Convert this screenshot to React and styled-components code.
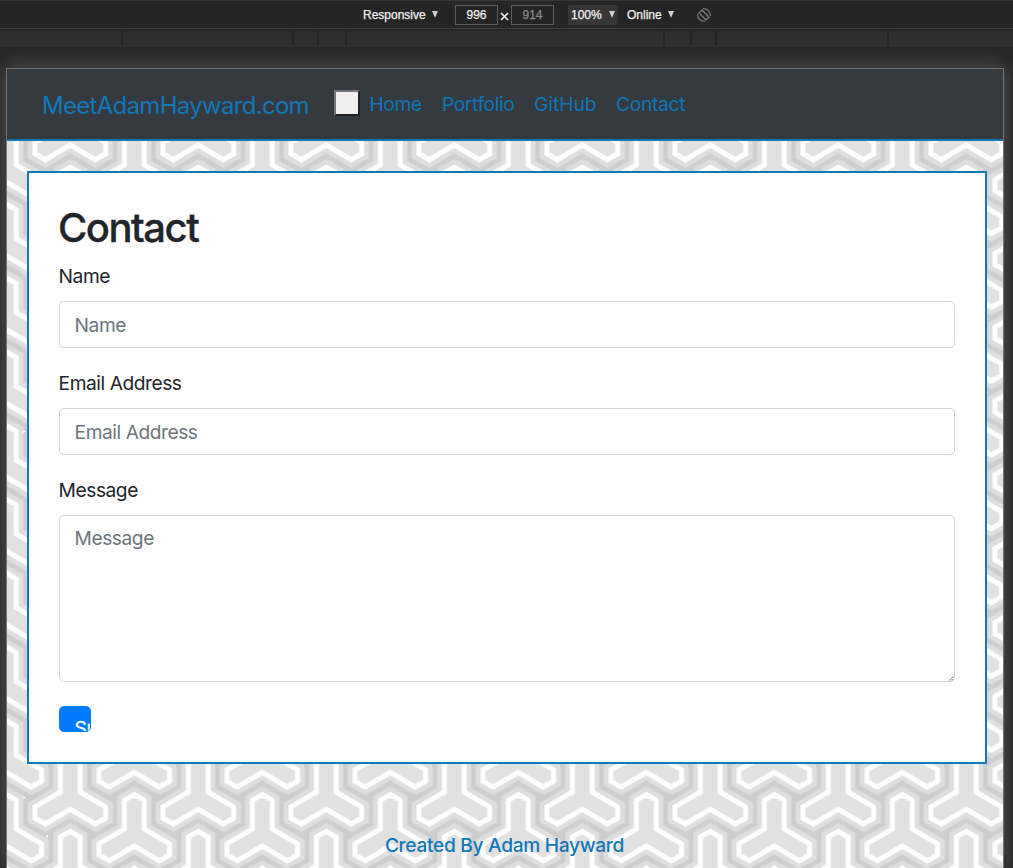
import React from 'react';
import styled, { createGlobalStyle } from 'styled-components';

const blue = '#1278b8';

const GlobalStyle = createGlobalStyle`
  *, *::before, *::after { box-sizing: border-box; }
  body {
    margin: 0;
    background: #282828;
    color: #212529;
    font-family: Inter, "Liberation Sans", sans-serif;
    font-size: 19.2px;
    line-height: 1.5;
    letter-spacing: -0.46px;
    overflow: hidden;
  }
`;

const Window = styled.div`
  height: 868px;
  display: flex;
  flex-direction: column;
  overflow: hidden;
`;

const Toolbar = styled.header`
  flex: none;
  height: 29px;
  border-top: 1px solid #36373d;
  border-bottom: 1px solid #3f3f3f;
  background: #252525;
  display: flex;
  align-items: center;
  padding-left: 363px;
  font-family: "Liberation Sans", sans-serif;
  font-size: 12px;
  line-height: 14px;
  letter-spacing: 0;
  color: #f2f2f2;
  -webkit-text-stroke: 0.25px currentColor;
`;

const Picker = styled.span`
  display: flex;
  align-items: center;
  justify-content: space-between;
  width: ${(p) => p.$width}px;
  height: 20px;
  margin-left: ${(p) => p.$before || 0}px;
  margin-right: ${(p) => p.$gap || 0}px;
  padding: 0 ${(p) => (p.$active ? 3 : 0)}px;
  border-radius: 2px;
  background: ${(p) => (p.$active ? '#363636' : 'transparent')};
`;

const Arrow = styled.i`
  border: solid transparent;
  border-width: 7px 3.5px 0;
  border-top-color: #cfcfcf;
`;

const SizeBox = styled.span`
  width: 43px;
  height: 20px;
  border: 1px solid #5d5d5d;
  text-align: center;
  line-height: 18px;
  color: ${(p) => (p.$dim ? '#8d8d8d' : '#f2f2f2')};
`;

const Times = styled.svg`
  width: 9px;
  height: 9px;
  margin: 4px 2px 0 2px;
`;

const RotateIcon = styled.svg`
  width: 14px;
  height: 14px;
`;

const Ruler = styled.div`
  flex: none;
  height: 17px;
  margin-top: 1px;
  border-top: 1px solid #242424;
  display: flex;
  gap: 2px;
  background: #252525;
  border-bottom: 1px solid #2f2f2f;
`;

const RulerCell = styled.div`
  flex: ${(p) => (p.$width ? 'none' : '1')};
  width: ${(p) => p.$width}px;
  background: #2f2f2f;
`;

const Stage = styled.div`
  flex: 1;
  padding: 21px 9px 0 6px;
  display: flex;
  overflow: hidden;
`;

const Device = styled.div`
  flex: 1;
  position: relative;
  border: 1px solid #737373;
  border-bottom: 0;
  box-shadow: 0 0 20px 0 #555;
  background: #e2e2e2;
`;

const Backdrop = styled.svg`
  position: absolute;
  inset: 0;
  width: 100%;
  height: 100%;
`;

const Page = styled.div`
  position: relative;
  display: flex;
  flex-direction: column;
`;

const Nav = styled.nav`
  height: 72px;
  background: #343a40;
  border-bottom: 2px solid ${blue};
  display: flex;
  align-items: flex-start;
  padding-left: 35px;
`;

const Brand = styled.a`
  width: 292px;
  margin-top: 19px;
  font-size: 24px;
  letter-spacing: -0.7px;
  color: ${blue};
`;

const Toggler = styled.button`
  width: 26px;
  height: 26px;
  margin: 21px 9.5px 0 0;
  padding: 0;
  border: 2px solid;
  border-color: #767676 #212121 #212121 #767676;
  background: #efefef;
`;

const NavLink = styled.a`
  width: ${(p) => p.$width}px;
  margin-top: 21px;
  letter-spacing: ${(p) => p.$tracking ?? -0.3}px;
  color: ${blue};
`;

const Card = styled.main`
  height: 593px;
  margin: 30px 16px 0 20px;
  padding: 31px 30px 0;
  border: 2px solid ${blue};
  background: #fff;
`;

const Title = styled.h1`
  margin: 0 0 10px -1px;
  font-size: 40px;
  font-weight: 500;
  line-height: 48px;
  letter-spacing: -1.5px;
  -webkit-text-stroke: 0.3px currentColor;
`;

const Label = styled.label`
  display: block;
  height: 29px;
  margin-bottom: 10px;
  text-indent: -0.4px;
`;

const Input = styled.input`
  display: block;
  width: 100%;
  height: 47px;
  margin-bottom: 21px;
  padding: 7px 14.6px;
  border: 1px solid #ced4da;
  border-radius: 4.8px;
  font: inherit;
  letter-spacing: inherit;
  &::placeholder { color: #6c757d; }
`;

const MessageField = styled.div`
  position: relative;
  margin-bottom: 24px;
`;

const TextArea = styled(Input)`
  height: 167px;
  margin: 0;
  padding-top: 8px;
  resize: none;
`;

const Grip = styled.svg`
  position: absolute;
  right: 1px;
  bottom: 1px;
  width: 5px;
  height: 5px;
`;

const Submit = styled.button`
  display: block;
  width: 32px;
  height: 26px;
  padding: 7px 14.6px;
  border: 1px solid #007bff;
  border-radius: 4.8px;
  background: #007bff;
  color: #fff;
  font: inherit;
  letter-spacing: inherit;
  -webkit-text-stroke: 0.3px currentColor;
  text-align: left;
  overflow: hidden;
`;

const Footer = styled.footer`
  margin: 67px 1px 0 0;
  text-align: center;
  font-weight: 500;
  letter-spacing: -0.33px;
  color: ${blue};
`;

/* Three-armed figure, centred on x = 0 with its notch at y = 0. */
const figure =
  'M0 -51.6 L9.9 -46 V-17 L35.3 -2.3 V9 L25 14.7 L0 0 L-25 14.7 L-35.3 9 V-2.3 L-9.9 -17 V-46 Z';
const spots = [
  [64, 36.9], [0, 0], [128, 0], [0, 73.8], [128, 73.8], [64, 110.7], [64, -36.9], [0, 147.6], [128, 147.6],
];

function TrefoilBackdrop() {
  return (
    <Backdrop aria-hidden="true">
      <defs>
        <pattern id="trefoil" width="128" height="73.8" patternUnits="userSpaceOnUse" patternTransform="translate(63.3 76)">
          <rect width="128" height="74" fill="#cdcdcd" />
          {spots.map(([x, y]) => (
            <path key={`h${x}-${y}`} d={figure} transform={`translate(${x} ${y})`} fill="#dedede" stroke="#dedede" strokeWidth="14.4" />
          ))}
          {spots.map(([x, y]) => (
            <path key={`f${x}-${y}`} d={figure} transform={`translate(${x} ${y})`} fill="#e1e1e1" stroke="#fff" strokeWidth="5" />
          ))}
        </pattern>
      </defs>
      <rect width="100%" height="100%" fill="url(#trefoil)" />
      <path d="M16 727 l3 1.5 l-3 1.5 Z M38 767 l3 -1 v3 Z M16 361 l3 1.5 l-3 1.5 Z" fill="#fff" />
    </Backdrop>
  );
}

const rulerCells = [121, 169, 23, 26, 316, 25, 23, 170];

export default function App() {
  return (
    <Window>
      <GlobalStyle />
      <Toolbar>
        <Picker $width={75} $gap={17}>Responsive<Arrow /></Picker>
        <SizeBox>996</SizeBox>
        <Times viewBox="0 0 9 9"><path d="M1 1 L8 8 M8 1 L1 8" stroke="#eee" strokeWidth="1.7" /></Times>
        <SizeBox $dim>914</SizeBox>
        <Picker $width={50} $before={14} $gap={9} $active>100%<Arrow /></Picker>
        <Picker $width={47} $gap={23}>Online<Arrow /></Picker>
        <RotateIcon viewBox="0 0 14 14" fill="none" stroke="#858585" strokeWidth="1.1">
          <path d="M5 2 L12 9 L9 12 L2 5 Z" />
          <path d="M6 0.8 A6.3 6.3 0 0 1 13.2 8 M8 13.2 A6.3 6.3 0 0 1 0.8 6" />
        </RotateIcon>
      </Toolbar>
      <Ruler>
        {rulerCells.map((w, i) => <RulerCell key={i} $width={w} />)}
        <RulerCell />
      </Ruler>
      <Stage>
        <Device>
          <TrefoilBackdrop />
          <Page>
            <Nav>
              <Brand>MeetAdamHayward.com</Brand>
              <Toggler aria-label="Toggle navigation" />
              <NavLink $width={72.5} $tracking={-0.4}>Home</NavLink>
              <NavLink $width={92} $tracking={-0.4}>Portfolio</NavLink>
              <NavLink $width={82} $tracking={0}>GitHub</NavLink>
              <NavLink $width={80}>Contact</NavLink>
            </Nav>
            <Card>
              <Title>Contact</Title>
              <Label htmlFor="name">Name</Label>
              <Input id="name" placeholder="Name" />
              <Label htmlFor="email">Email Address</Label>
              <Input id="email" placeholder="Email Address" />
              <Label htmlFor="message">Message</Label>
              <MessageField>
                <TextArea as="textarea" id="message" placeholder="Message" />
                <Grip viewBox="0 0 5 5"><path d="M0.5 4.5 L4.5 0.5 M3 4.5 L4.5 3" stroke="#666" strokeWidth="0.9" /></Grip>
              </MessageField>
              <Submit>Submit</Submit>
            </Card>
            <Footer>Created By Adam Hayward</Footer>
          </Page>
        </Device>
      </Stage>
    </Window>
  );
}
